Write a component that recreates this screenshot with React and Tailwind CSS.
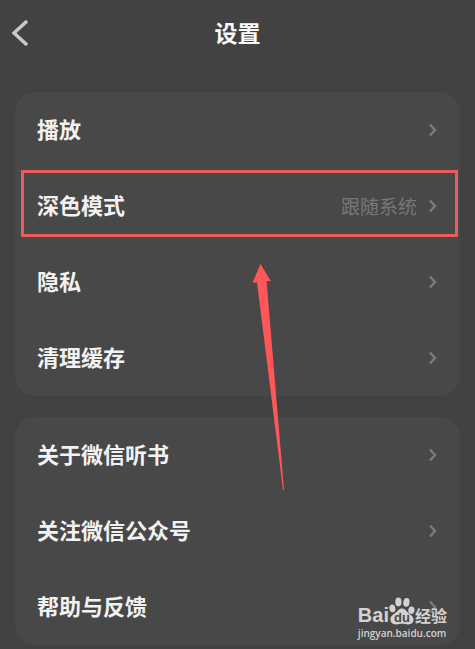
import React from 'react'

const playSettings = [
  { label: '播放' },
  { label: '深色模式', value: '跟随系统', highlighted: true },
  { label: '隐私' },
  { label: '清理缓存' },
]

const aboutSettings = [
  { label: '关于微信听书' },
  { label: '关注微信公众号' },
  { label: '帮助与反馈' },
]

const RowChevron = () => (
  <svg width="8" height="14" viewBox="0 0 8 14" fill="none" stroke="#7b7b7b" strokeWidth="2.4" aria-hidden="true">
    <path d="M1 1.5L6 7L1 12.5" />
  </svg>
)

const SettingRow = ({ label, value, highlighted }) => (
  <li className="relative">
    <button type="button" className="flex h-[76px] w-full items-center justify-between pl-[22px] pr-[23px] text-left">
      <span className="pb-1 text-[22px] font-bold leading-8 text-[#f2f2f2]">{label}</span>
      <span className="flex items-center gap-3">
        {value && <span className="text-[19px] leading-8 text-[#777777]">{value}</span>}
        <RowChevron />
      </span>
    </button>
    {highlighted && (
      <div className="pointer-events-none absolute inset-x-0 top-0.5 bottom-[7px] ml-1.5 mr-0.5 border-[3px] border-[#ec5c5c]" />
    )}
  </li>
)

const SettingGroup = ({ items }) => (
  <ul className="rounded-[20px] bg-[#484848]">
    {items.map((item) => (
      <SettingRow key={item.label} {...item} />
    ))}
  </ul>
)

const Arrow = () => (
  <svg
    className="pointer-events-none absolute left-[252px] top-[264px]"
    width="33"
    height="226"
    viewBox="0 0 33 226"
    aria-hidden="true"
  >
    <path d="M8.5 0L18.8 17L14.6 17.3L32 226H31L5 18.4L0.5 18.8Z" fill="#ff5757" />
  </svg>
)

const Paw = () => (
  <svg className="mb-0.5" width="26" height="28" viewBox="0 0 26 28" fill="#d2d2d2" aria-hidden="true">
    <ellipse cx="3.4" cy="11.4" rx="3" ry="3.9" transform="rotate(-12 3.4 11.4)" />
    <ellipse cx="9.4" cy="5" rx="3.1" ry="4.4" />
    <ellipse cx="17.4" cy="5.4" rx="3.1" ry="4.4" transform="rotate(10 17.4 5.4)" />
    <ellipse cx="22.4" cy="13.2" rx="3.1" ry="3.8" transform="rotate(12 22.4 13.2)" />
    <path d="M13 11.5C9.8 11.5 9.2 13.8 6.6 15.8C3.6 18 1.2 19.6 1.4 22.8C1.6 26 4.2 27.6 7.2 27.4C9.4 27.2 10.8 26.8 13 26.8C15.4 26.8 17 27.4 19.2 27.4C22.4 27.4 24.6 25.8 24.6 22.6C24.6 19.6 22 18.2 19.6 16.2C17 14 16.2 11.5 13 11.5Z" />
    <text x="13" y="25" textAnchor="middle" fontSize="13" fontWeight="700" fontFamily="'Liberation Sans', sans-serif" fill="#484848">
      du
    </text>
  </svg>
)

const Watermark = () => (
  <div className="pointer-events-none absolute bottom-2.5 right-7 flex flex-col text-[#d2d2d2]">
    <div className="flex items-end">
      <span className="font-['Liberation_Sans',sans-serif] text-[20px] font-bold leading-6">Bai</span>
      <Paw />
      <span className="text-[16px] font-bold leading-6">经验</span>
    </div>
    <span className="font-['Open_Sans',sans-serif] text-[10px] font-semibold leading-3">jingyan.baidu.com</span>
  </div>
)

const App = () => {
  return (
    <div className="relative min-h-screen bg-[#424242] pb-1 font-['Noto_Sans_CJK_SC',sans-serif]">
      <header className="relative flex h-16 items-center justify-center">
        <button type="button" aria-label="返回" className="absolute left-3 top-5">
          <svg width="16" height="26" viewBox="0 0 16 26" fill="none" stroke="#c9c9c9" strokeWidth="3.4" aria-hidden="true">
            <path d="M15 1L2 13L15 25" />
          </svg>
        </button>
        <h1 className="text-[23px] font-bold leading-8 text-[#fafafa]">设置</h1>
      </header>

      <main className="flex flex-col gap-[21px] px-[15px] pt-7">
        <SettingGroup items={playSettings} />
        <SettingGroup items={aboutSettings} />
      </main>

      <Arrow />
      <Watermark />
    </div>
  )
}

export default App
